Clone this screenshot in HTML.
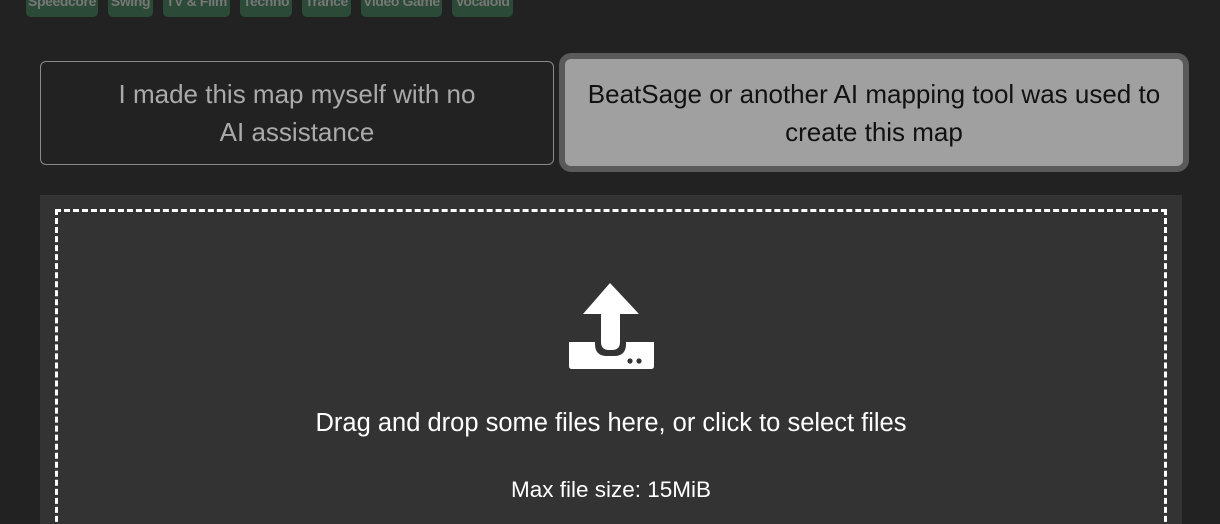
<!DOCTYPE html><html><head><style>
html,body{margin:0;width:1220px;height:524px;overflow:hidden}
body{background:#222;font-family:"Liberation Sans",sans-serif;position:relative}
.tag{position:absolute;top:-10px;height:27px;background:#2b4a37;color:#777;border-radius:5px;font-size:14px;letter-spacing:-0.4px;font-weight:bold;line-height:22px;text-align:center;white-space:nowrap;overflow:hidden}
.b{position:absolute;box-sizing:border-box;display:flex;align-items:center;justify-content:center;text-align:center;font-size:26px;line-height:38px}
</style></head><body>
<div class="tag" style="left:26px;width:72px">Speedcore</div>
<div class="tag" style="left:108px;width:45px">Swing</div>
<div class="tag" style="left:163px;width:67px">TV &amp; Film</div>
<div class="tag" style="left:240px;width:52px">Techno</div>
<div class="tag" style="left:302px;width:49px">Trance</div>
<div class="tag" style="left:361px;width:81px">Video Game</div>
<div class="tag" style="left:452px;width:61px">Vocaloid</div>
<div class="b" style="left:40px;top:61px;width:514px;height:104px;border:1.5px solid #8a8a8a;border-radius:6px;color:#aaa">I made this map myself with no<br>AI assistance</div>
<div class="b" style="left:559px;top:53px;width:630px;height:119px;border:6px solid #5a5a5a;border-radius:12px;background:#a0a0a0;color:#111">BeatSage or another AI mapping tool was used to<br>create this map</div>
<div style="position:absolute;left:40px;top:195px;width:1142px;height:340px;background:#333"></div>
<div style="position:absolute;left:55px;top:209px;width:1112px;height:340px;box-sizing:border-box;border:3px dashed #fff"></div>
<svg style="position:absolute;left:560px;top:280px" width="100" height="92" viewBox="560 280 100 92">
<path d="M610 283 L639 314 L620 314 L620 342 Q620 350 612 350 L609 350 Q601 350 601 342 L601 314 L583 314 Z" fill="#fff"/>
<path d="M569 342 L595 342 L595 344 Q595 356 607 356 L614 356 Q626 356 626 344 L626 342 L654 342 L654 366 Q654 369 651 369 L572 369 Q569 369 569 366 Z" fill="#fff"/>
<circle cx="630" cy="361" r="2.6" fill="#333"/><circle cx="639" cy="361" r="2.6" fill="#333"/>
</svg>
<div style="position:absolute;left:0;width:1222px;top:409px;text-align:center;color:#fff;font-size:25.5px">Drag and drop some files here, or click to select files</div>
<div style="position:absolute;left:0;width:1222px;top:477px;text-align:center;color:#fff;font-size:22.5px">Max file size: 15MiB</div>
</body></html>
